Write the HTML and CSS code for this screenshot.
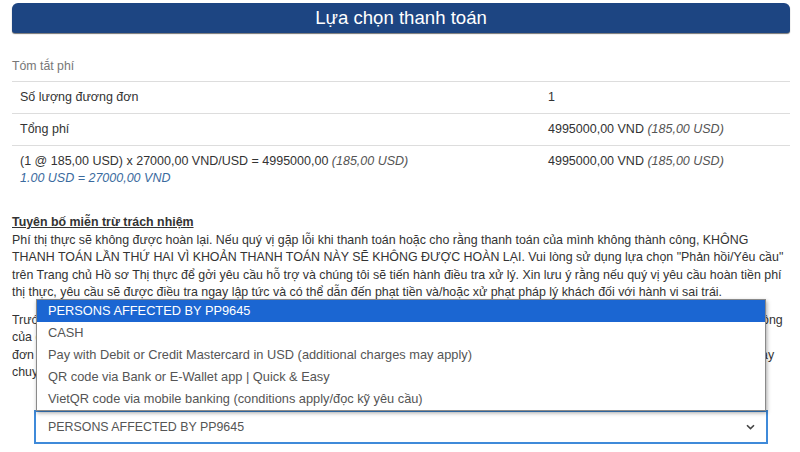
FILE: index.html
```html
<!DOCTYPE html>
<html lang="vi">
<head>
<meta charset="utf-8">
<title>Lựa chọn thanh toán</title>
<link rel="stylesheet" href="styles.css">
</head>
<body>
<div class="page">
  <div class="header"><h1 class="header-title">Lựa chọn thanh toán</h1></div>

  <div class="summary-label">Tóm tắt phí</div>
  <table class="fees">
    <tr>
      <td class="fee-name">Số lượng đương đơn</td>
      <td class="fee-value">1</td>
    </tr>
    <tr>
      <td class="fee-name">Tổng phí</td>
      <td class="fee-value">4995000,00 VND <em class="usd">(185,00 USD)</em></td>
    </tr>
    <tr>
      <td class="fee-name">(1 @ 185,00 USD) x 27000,00 VND/USD = 4995000,00 <em class="usd">(185,00 USD)</em><br><em class="rate">1.00 USD = 27000,00 VND</em></td>
      <td class="fee-value">4995000,00 VND <em class="usd">(185,00 USD)</em></td>
    </tr>
  </table>

  <div class="disclaimer">
    <div class="disclaimer-title">Tuyên bố miễn trừ trách nhiệm</div>
    <p class="disclaimer-text">Phí thị thực sẽ không được hoàn lại. Nếu quý vị gặp lỗi khi thanh toán hoặc cho rằng thanh toán của mình không thành công, KHÔNG THANH TOÁN LẦN THỨ HAI VÌ KHOẢN THANH TOÁN NÀY SẼ KHÔNG ĐƯỢC HOÀN LẠI. Vui lòng sử dụng lựa chọn "Phản hồi/Yêu cầu" trên Trang chủ Hồ sơ Thị thực để gởi yêu cầu hỗ trợ và chúng tôi sẽ tiến hành điều tra xử lý. Xin lưu ý rằng nếu quý vị yêu cầu hoàn tiền phí thị thực, yêu cầu sẽ được điều tra ngay lập tức và có thể dẫn đến phạt tiền và/hoặc xử phạt pháp lý khách đối với hành vi sai trái.</p>
    <p class="notice-text">Trước khi tiếp tục, vui lòng kiểm tra kỹ thông tin hồ sơ và phương thức thanh toán mà quý vị đã lựa chọn ra vì những lựa chọn này sẽ không<br>của quý vị được xác nhận. Sau khi thanh toán thành công, hệ thống sẽ tự động cập nhật trạng thái hồ sơ và gửi email cho quý vị<br>đơn của quý vị. Nếu quý vị chọn thanh toán bằng mã QR, vui lòng hoàn tất giao dịch trong thời gian hiển thị ở trên màn hình điện thoại này<br>chuyển khoản để tránh việc mã hết hạn hoặc giao dịch không thành công.</p>
  </div>

  <div class="field">
    <div class="select">
      <span class="select-value">PERSONS AFFECTED BY PP9645</span>
      <svg class="select-arrow" width="9" height="6" viewBox="0 0 9 6"><path d="M1 1.2 L4.5 4.6 L8 1.2" fill="none" stroke="#444" stroke-width="1.6"/></svg>
      <ul class="options">
        <li class="option selected">PERSONS AFFECTED BY PP9645</li>
        <li class="option">CASH</li>
        <li class="option">Pay with Debit or Credit Mastercard in USD (additional charges may apply)</li>
        <li class="option">QR code via Bank or E-Wallet app | Quick &amp; Easy</li>
        <li class="option">VietQR code via mobile banking (conditions apply/đọc kỹ yêu cầu)</li>
      </ul>
    </div>
  </div>
</div>
</body>
</html>
```
FILE: styles.css
```css
* { box-sizing: border-box; }
html, body { margin: 0; padding: 0; background: #fff; }
body {
  font-family: "Liberation Sans", Arial, sans-serif;
  font-size: 12.5px;
  color: #333;
  overflow: hidden;
}
.page {
  width: 778px;
  margin-left: 12px;
  padding-top: 3px;
}
.header {
  height: 30px;
  background: #1d4582;
  border-radius: 6px 6px 3px 3px;
  box-shadow: 0 1px 1px rgba(0, 0, 0, 0.55);
  display: flex;
  align-items: center;
  justify-content: center;
}
.header-title {
  margin: 0;
  font-size: 18.6px;
  font-weight: normal;
  color: #fff;
  line-height: 22px;
}
.summary-label {
  margin-top: 25px;
  font-size: 12.3px;
  line-height: 17px;
  color: #777;
}
.fees {
  width: 100%;
  border-collapse: collapse;
  margin-top: 6px;
}
.fees td {
  border-top: 1px solid #ddd;
  padding: 7px 8px;
  line-height: 17px;
  vertical-align: top;
}
.fee-name { width: 528px; }
.usd { color: #555; }
.rate { color: #3a6a9e; }
.disclaimer {
  margin-top: 20px;
  font-size: 12.4px;
}
.disclaimer-title {
  font-weight: bold;
  text-decoration: underline;
  line-height: 17.5px;
}
.disclaimer-text {
  margin: 0 0 10px 0;
  line-height: 17.5px;
}
.notice-text {
  margin: 0;
  line-height: 17.5px;
  white-space: nowrap;
  overflow: hidden;
}
.field {
  margin: 28px 22px 0 22px;
}
.select {
  position: relative;
  height: 34px;
  border: 2px solid #3f8ad9;
  display: flex;
  align-items: center;
  justify-content: space-between;
  padding: 0 11px 0 12px;
  background: #fff;
}
.select-value {
  font-size: 12.4px;
  color: #555;
}
.select-arrow { display: block; }
.options {
  position: absolute;
  left: 0;
  right: 0;
  bottom: 100%;
  margin: 0 0 1px 0;
  padding: 0;
  list-style: none;
  background: #fff;
  border: 1px solid #8a8a8a;
  box-shadow: 1px 2px 4px rgba(0, 0, 0, 0.35);
}
.option {
  height: 22px;
  line-height: 22px;
  padding-left: 11px;
  font-size: 12.8px;
  color: #555;
  white-space: nowrap;
}
.option.selected {
  background: #1b66d2;
  color: #fff;
}
```
